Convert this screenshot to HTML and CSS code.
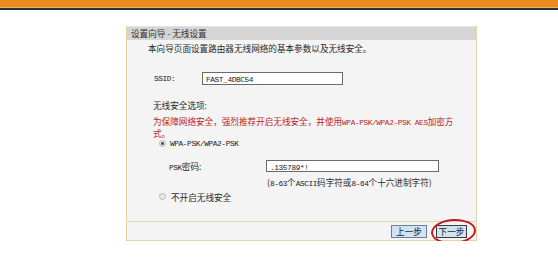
FILE: index.html
```html
<!doctype html>
<html lang="zh-CN">
<head>
<meta charset="utf-8">
<title>设置向导 - 无线设置</title>
<link rel="stylesheet" href="styles.css">
</head>
<body>

	<div class="topbar"></div>

	<div class="panel">

		<div class="panel-head">设置向导 - 无线设置</div>

		<div class="panel-body">

			<div class="intro">本向导页面设置路由器无线网络的基本参数以及无线安全。</div>

			<div class="row ssid-row">
				<span class="lbl mono">SSID:</span>
				<span class="field ssid"><span class="mono">FAST_4DBC54</span></span>
			</div>

			<div class="sec-title">无线安全选项:</div>

			<div class="warn">为保障网络安全，强烈推荐开启无线安全，并使用<span class="mono">WPA-PSK/WPA2-PSK AES</span>加密方式。</div>

			<div class="row radio-row">
				<span class="radio on"></span>
				<span class="mono">WPA-PSK/WPA2-PSK</span>
			</div>

			<div class="row psk-row">
				<span class="lbl psk-lbl"><span class="mono">PSK</span>密码:</span>
				<span class="field psk"><span class="mono">.135789*!</span></span>
			</div>

			<div class="hint">(<span class="mono">8-63</span>个<span class="mono">ASCII</span>码字符或<span class="mono">8-64</span>个十六进制字符)</div>

			<div class="row radio-row off-row">
				<span class="radio"></span>
				<span>不开启无线安全</span>
			</div>

		</div>

		<div class="panel-foot">
			<span class="btn">上一步</span>
			<span class="btn next">下一步<span class="circle"></span></span>
		</div>

	</div>

</body>
</html>
```

FILE: styles.css
```css
/* router setup wizard, wireless page */

	body { background: #fff; color: #2a2a2a; font: 8.6px "Noto Sans CJK SC", "Liberation Sans", sans-serif; margin: 0; }

	.mono { font-family: "Liberation Mono", monospace; font-size: 7.8px; letter-spacing: -0.4px; color: #222; }

	.topbar { background: #e98b1f; border-bottom: 1px solid #f0b060; box-shadow: 0 2px 0 #2c3242; height: 7px; }

	.panel { background: #f4f4f4; border: 1px solid #e2d3aa; border-top: 0; box-sizing: border-box; margin: 18px 0 0 126px; width: 351px; }

	.panel-head { background: #d5d5d5; border-top: 1px solid #e4e4e4; color: #333; height: 13px; line-height: 13px; padding-left: 4px; }

	.panel-body { height: 181px; padding: 3px 0 0 21px; box-sizing: border-box; }

	.intro { line-height: 10px; }

	.row { align-items: center; display: flex; }

	.ssid-row { height: 13px; margin: 19px 0 0 6px; }
	.lbl { width: 48px; }

	.field { background: #fff; border: 1px solid #6a6a6a; box-sizing: border-box; height: 13px; line-height: 11px; padding-left: 3px; }
	.ssid { width: 141px; }

	.sec-title { line-height: 10px; margin: 15px 0 0 5px; }

	.warn { color: #b8262a; line-height: 11px; margin: 6px 0 0 5px; width: 302px; }
	.warn .mono { color: #b8262a; line-height: 1; }

	.radio-row { height: 10px; margin: 0 0 0 11px; }
	.radio { background: #e8e8e8; border: 1px solid #b8b8b8; border-radius: 50%; box-sizing: border-box; height: 7px; margin-right: 4px; position: relative; width: 7px; }
	.radio.on::after { background: #3a4a5a; border-radius: 50%; content: ""; height: 3px; left: 1px; position: absolute; top: 1px; width: 3px; }

	.psk-row { height: 12px; margin: 11px 0 0 21px; }
	.psk-lbl { width: 97px; }
	.psk { height: 12px; width: 173px; }

	.hint { line-height: 10px; margin: 5px 0 0 119px; }

	.off-row { margin-top: 3px; }
	.off-row .radio { margin-right: 5px; }

	.panel-foot { align-items: center; border-top: 1px solid #e2d3aa; display: flex; gap: 9px; height: 18px; justify-content: flex-end; padding-right: 9px; }

	.btn { background: #cfe3f3; border: 1px solid #6d7f90; box-sizing: border-box; color: #222; height: 13px; line-height: 11px; position: relative; text-align: center; width: 36px; }
	.btn.next { border-color: #3b3b3b; width: 31px; }

	.circle { border: 2px solid #c11a22; border-radius: 50%; height: 21px; left: -6px; position: absolute; top: -7px; transform: rotate(-4deg); width: 41px; }
```
